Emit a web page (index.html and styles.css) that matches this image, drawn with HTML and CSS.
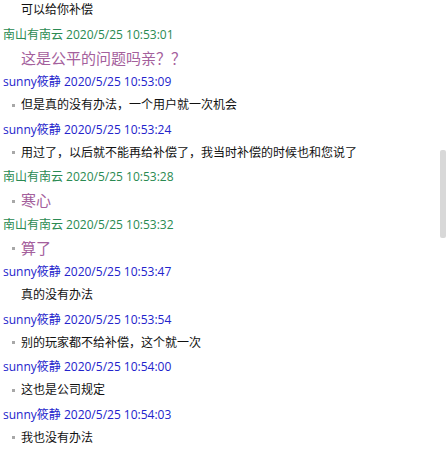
FILE: index.html
```html
<!DOCTYPE html>
<html lang="zh-CN">
<head>
<meta charset="utf-8">
<link rel="stylesheet" href="styles.css">
</head>
<body>
<div class="log">
  <div class="body plain first">可以给你补偿</div>

  <div class="head green">南山有南云 2020/5/25 10:53:01</div>
  <div class="body plain purple">这是公平的问题吗亲？？</div>

  <div class="head blue">sunny筱静 2020/5/25 10:53:09</div>
  <div class="body"><span class="dot"></span>但是真的没有办法，一个用户就一次机会</div>

  <div class="head blue">sunny筱静 2020/5/25 10:53:24</div>
  <div class="body"><span class="dot"></span>用过了，以后就不能再给补偿了，我当时补偿的时候也和您说了</div>

  <div class="head green">南山有南云 2020/5/25 10:53:28</div>
  <div class="body purple"><span class="dot"></span>寒心</div>

  <div class="head green">南山有南云 2020/5/25 10:53:32</div>
  <div class="body purple"><span class="dot"></span>算了</div>

  <div class="head blue">sunny筱静 2020/5/25 10:53:47</div>
  <div class="body plain">真的没有办法</div>

  <div class="head blue">sunny筱静 2020/5/25 10:53:54</div>
  <div class="body"><span class="dot"></span>别的玩家都不给补偿，这个就一次</div>

  <div class="head blue">sunny筱静 2020/5/25 10:54:00</div>
  <div class="body"><span class="dot"></span>这也是公司规定</div>

  <div class="head blue">sunny筱静 2020/5/25 10:54:03</div>
  <div class="body"><span class="dot"></span>我也没有办法</div>
</div>
<div class="thumb"></div>
</body>
</html>
```
FILE: styles.css
```css
html, body {
  margin: 0;
  padding: 0;
  background: #ffffff;
  overflow: hidden;
}
body {
  width: 447px;
  height: 452px;
  position: relative;
  font-family: "Open Sans", "Noto Sans CJK SC", sans-serif;
  color: #111111;
}
.log {
  display: flex;
  flex-direction: column;
  margin-top: -2px;
}
.head {
  height: 23px;
  line-height: 23px;
  font-size: 12px;
  padding-left: 3px;
  white-space: nowrap;
}
.green { color: #2a8a52; }
.blue { color: #2323cc; }
.body {
  height: 24.5px;
  line-height: 24.5px;
  font-size: 12px;
  padding-left: 12px;
  white-space: nowrap;
  display: flex;
  align-items: center;
}
.body.plain {
  padding-left: 21px;
}
.body.purple {
  color: #a4609c;
  font-size: 15px;
}
.body.purple .dot {
  margin-top: 2px;
}
.dot {
  display: inline-block;
  width: 3px;
  height: 3px;
  background: #a8a8a8;
  margin-right: 6px;
  flex: none;
}
.thumb {
  position: absolute;
  left: 440px;
  top: 150px;
  width: 6px;
  height: 88px;
  background: #d8d8d8;
  border-radius: 2px;
}
```
